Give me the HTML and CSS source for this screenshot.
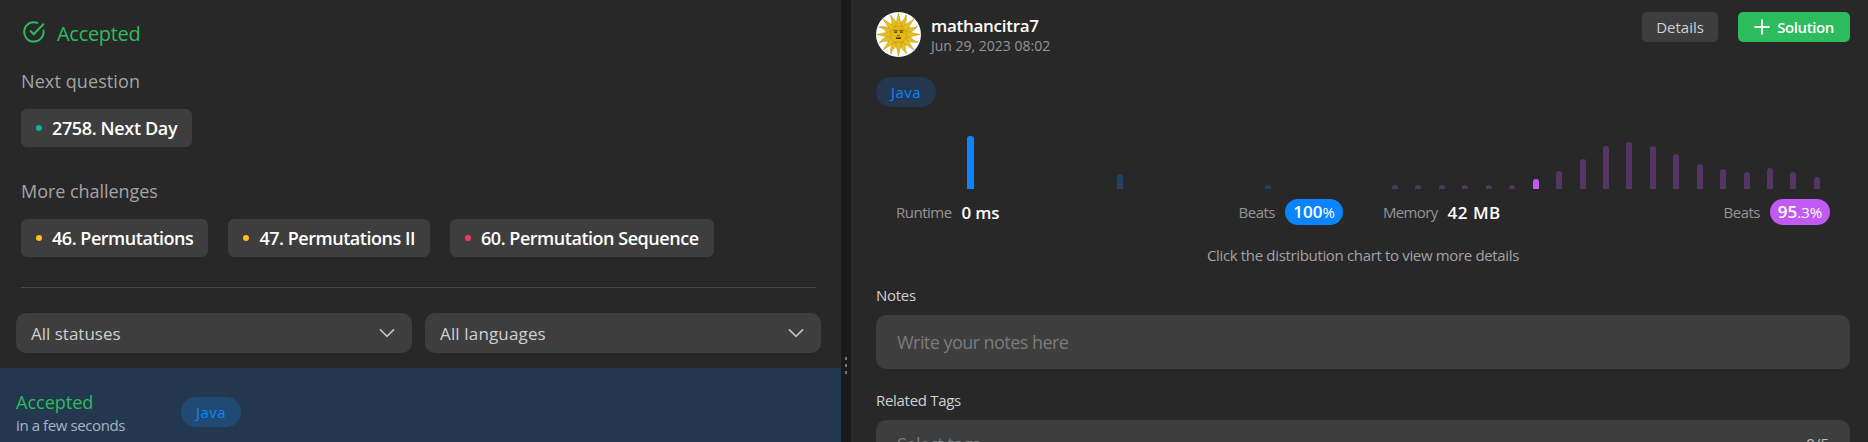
FILE: index.html
```html
<!DOCTYPE html>
<html lang="en">
<head>
<meta charset="utf-8">
<title>Submission</title>
<link rel="stylesheet" href="styles.css">
</head>
<body>
<main class="app">
  <section class="panel left">
    <div class="result">
      <div class="verdict">
        <svg class="verdict-icon" viewBox="0 0 22 22" fill="none" stroke="currentColor" stroke-width="2" stroke-linecap="round" stroke-linejoin="round"><path d="M14.2 1.8A9.7 9.7 0 1 0 20.5 9.6"/><path d="M7.5 10l3.2 3.2L20.3 3.2"/></svg>
        <span class="verdict-text">Accepted</span>
      </div>
      <h2 class="heading next">Next question</h2>
      <div class="chips">
        <a class="chip easy"><i class="dot"></i><span class="day">2758. Next Day</span></a>
      </div>
      <h2 class="heading more">More challenges</h2>
      <div class="chips">
        <a class="chip medium"><i class="dot"></i><span>46. Permutations</span></a>
        <a class="chip medium"><i class="dot"></i><span>47. Permutations II</span></a>
        <a class="chip hard"><i class="dot"></i><span>60. Permutation Sequence</span></a>
      </div>
    </div>
    <div class="filters">
      <div class="select"><span>All statuses</span><svg class="chevron" viewBox="0 0 16 10"><path d="M1 1.3l7 7 7-7"/></svg></div>
      <div class="select"><span class="langs">All languages</span><svg class="chevron" viewBox="0 0 16 10"><path d="M1 1.3l7 7 7-7"/></svg></div>
    </div>
    <div class="submission">
      <div class="status"><div class="status-name">Accepted</div><div class="status-time">in a few seconds</div></div>
      <span class="lang">Java</span>
    </div>
  </section>

  <div class="splitter"><i></i><i></i><i></i></div>

  <section class="panel right">
    <header class="top">
      <svg class="avatar" viewBox="-22.5 -22.5 45 45">
        <circle r="22.5" fill="#fff"/>
        <defs>
          <path id="ray" d="M-3.200-7L0-22 3.200-7z"/>
          <path id="wave" d="M-3-7C-4.500-12 .8-14-.6-21 3.200-15.500 1.500-13 3.400-7z"/>
        </defs>
        <g fill="#e8c01c" stroke="#a8830f" stroke-width=".4">
          <use href="#wave" transform="rotate(22.5)"/><use href="#wave" transform="rotate(67.5)"/><use href="#wave" transform="rotate(112.5)"/><use href="#wave" transform="rotate(157.500)"/><use href="#wave" transform="rotate(202.5)"/><use href="#wave" transform="rotate(247.5)"/><use href="#wave" transform="rotate(292.5)"/><use href="#wave" transform="rotate(337.5)"/>
          <use href="#ray"/><use href="#ray" transform="rotate(45)"/><use href="#ray" transform="rotate(90)"/><use href="#ray" transform="rotate(135)"/><use href="#ray" transform="rotate(180)"/><use href="#ray" transform="rotate(225)"/><use href="#ray" transform="rotate(270)"/><use href="#ray" transform="rotate(315)"/>
        </g>
        <circle r="8.300" fill="#e3b914" stroke="#b18a10" stroke-width=".4"/>
        <g fill="none" stroke="#3a2c08"><path d="M-5-3.800q2-1.200 4 0M1-3.800q2-1.200 4 0" stroke-width=".7"/><path d="M-4.200-2.300h2.800M1.400-2.300h2.800" stroke-width="1.300"/><path d="M-1.200 1.200h2.400" stroke-width=".8"/><path d="M-2.500 3.700h5" stroke-width="1.500"/></g>
      </svg>
      <div class="user"><div class="name">mathancitra7</div><div class="date">Jun 29, 2023 08:02</div></div>
      <button class="btn details">Details</button>
      <button class="btn solution"><svg class="plus" viewBox="0 0 16 16"><path d="M8 .5v15M.5 8h15"/></svg><span>Solution</span></button>
    </header>
    <div class="tagline"><span class="lang">Java</span></div>

    <div class="charts">
      <div class="chart runtime">
        <div class="bars">
          <i class="on" style="height:53px"></i><i style="height:15px"></i><i style="height:4px"></i>
        </div>
        <div class="stats"><span class="label run">Runtime</span><b class="value">0 ms</b><span class="label beats">Beats</span><span class="badge"><b>100</b>%</span></div>
      </div>
      <div class="chart memory">
        <div class="bars">
          <i style="height:4px"></i><i style="height:4px"></i><i style="height:4px"></i><i style="height:4px"></i><i style="height:4px"></i><i style="height:4px"></i><i class="on" style="height:10px"></i><i style="height:18px"></i><i style="height:30px"></i><i style="height:43px"></i><i style="height:47px"></i><i style="height:43px"></i><i style="height:35px"></i><i style="height:25px"></i><i style="height:20px"></i><i style="height:17px"></i><i style="height:21px"></i><i style="height:17px"></i><i style="height:12px"></i>
        </div>
        <div class="stats"><span class="label mem">Memory</span><b class="value mb">42 MB</b><span class="label beats">Beats</span><span class="badge"><b>95</b>.3%</span></div>
      </div>
    </div>
    <p class="hint">Click the distribution chart to view more details</p>

    <label class="field-label">Notes</label>
    <div class="field">Write your notes here</div>
    <label class="field-label tags">Related Tags</label>
    <div class="field select-tags"><span>Select tags</span><span class="count">0/5</span></div>
  </section>
</main>
</body>
</html>
```
FILE: styles.css
```css
* { box-sizing: border-box; }

body {
  margin: 0;
  height: 442px;
  overflow: hidden;
  background: #282828;
  font-family: "Open Sans", "Noto Sans", sans-serif;
  font-size: 15px;
  color: #eff1f6;
}

.app { display: flex; height: 442px; overflow: hidden; white-space: nowrap; }
.panel { background: #282828; }

/* Left panel */
.left { width: 841px; flex: none; }
.result { margin: 0 25px 0 21px; padding-top: 20px; height: 288px; border-bottom: 1px solid #4a4a4a; }
.verdict { display: flex; height: 28px; color: #2cbb5d; }
.verdict-icon { width: 22px; height: 22px; margin: 1px 12px 0 2px; }
.verdict-text { font-size: 20px; line-height: 28px; font-weight: 500; letter-spacing: -.3px; }
.heading { margin: 21px 0 0; font-size: 18px; line-height: 24px; font-weight: 400; color: #a3a3a6; }
.next { letter-spacing: .1px; }
.more { margin-top: 32px; letter-spacing: -.05px; }
.chips { display: flex; gap: 20px; margin-top: 16px; }
.chip {
  display: flex; align-items: center; height: 38px; padding: 0 15px;
  border-radius: 6px; background: #3e3e3e; color: #fff;
  font-size: 18px; font-weight: 600; letter-spacing: -.47px;
}
.day { letter-spacing: -.36px; }
.dot { width: 6px; height: 6px; margin-right: 10px; border-radius: 50%; background: currentColor; }
.easy .dot { background: #00b8a3; }
.medium .dot { background: #ffc01e; }
.hard .dot { background: #ff375f; }

.filters { display: flex; gap: 13px; margin: 25px 20px 0 16px; }
.select {
  display: flex; flex: 1; align-items: center; justify-content: space-between;
  height: 40px; padding: 0 17px 0 15px; border-radius: 10px;
  background: #3e3e3e; color: #d0d0d1; font-size: 17px;
}
.langs { letter-spacing: .15px; }
.chevron { width: 16px; height: 10px; fill: none; stroke: #c0c0c0; stroke-width: 1.7; }

.submission { display: flex; height: 74px; margin-top: 15px; padding: 22px 16px 0; background: #23384f; }
.status { width: 165px; }
.status-name { font-size: 18px; line-height: 24px; font-weight: 500; color: #2cbb5d; }
.status-time { margin-top: 1px; line-height: 20px; letter-spacing: -.4px; color: #a9b3c0; }
.lang {
  display: inline-block; width: 60px; height: 30px; border-radius: 15px;
  background: #23384f; color: #0a84ff; font-weight: 500; line-height: 30px; text-align: center; letter-spacing: .4px;
}
.submission .lang { margin-top: 7px; background: #204a74; }

/* Divider between the panels */
.splitter {
  display: flex; flex: none; flex-direction: column; align-items: center; gap: 4px;
  width: 10px; padding-top: 357px; background: #1a1a1a;
}
.splitter i { width: 2px; height: 3px; background: #777; }

/* Right panel */
.right { flex: 1; padding: 12px 18px 0 25px; }
.top { display: flex; height: 45px; }
.avatar { width: 45px; height: 45px; margin-right: 10px; }
.user { padding-top: 3px; margin-right: auto; }
.name { color: #fff; font-size: 17px; line-height: 22px; font-weight: 600; letter-spacing: -.28px; }
.date { color: #959597; font-size: 14px; line-height: 18px; }
.btn {
  height: 30px; border: 0; border-radius: 5px; padding: 0;
  font: 500 15px/30px "Open Sans", sans-serif; color: #d0d0d1; background: #3e3e3e;
}
.details { width: 76px; margin-right: 20px; }
.solution {
  display: flex; align-items: center; justify-content: center; gap: 7px;
  width: 112px; background: #2cbb5d; color: #fff; font-weight: 600; letter-spacing: -.4px;
}
.plus { width: 16px; height: 16px; stroke: #fff; stroke-width: 1.8; }
.tagline { display: flex; margin-top: 20px; }

.charts { display: flex; margin: 28px 0 0 20px; }
.chart { width: 447px; }
.memory { margin-left: 40px; }
.bars { display: flex; align-items: flex-end; justify-content: space-between; height: 54px; }
.runtime .bars { padding: 0 72px 0 71px; }
.memory .bars { padding: 0 10px 0 9px; }
.bars i { width: 6px; border-radius: 3px 3px 0 0; background: #204264; }
.memory .bars i { background: #563466; }
.runtime .bars .on { width: 7px; background: #0a84ff; }
.memory .bars .on { background: #bf5af2; }
.stats { display: flex; align-items: center; height: 26px; margin-top: 10px; }
.label { color: #959597; letter-spacing: -.5px; }
.mem { letter-spacing: -.65px; }
.value { margin-left: 10px; color: #fff; font-size: 17px; font-weight: 600; letter-spacing: -.2px; }
.mb { letter-spacing: .5px; }
.beats { margin-left: auto; }
.badge {
  display: flex; align-items: baseline; justify-content: center; width: 58px; height: 26px; margin-left: 10px;
  border-radius: 13px; background: #0a84ff; color: #fff; line-height: 26px;
}
.badge b { font-size: 17px; font-weight: 600; }
.memory .badge { width: 60px; background: #bf5af2; }

.hint { margin: 20px 0 0; color: #a3a3a6; line-height: 20px; letter-spacing: -.34px; text-align: center; }
.field-label { display: block; margin-top: 20px; color: #d0d0d1; line-height: 20px; letter-spacing: -.3px; }
.field {
  height: 54px; margin-top: 10px; padding: 0 21px; border-radius: 10px;
  background: #3e3e3e; color: #7b7b7b; font-size: 18px; line-height: 54px; letter-spacing: -.55px;
}
.tags { margin-top: 21px; }
.select-tags { display: flex; justify-content: space-between; line-height: 49px; }
.count { font-size: 15px; line-height: 47px; letter-spacing: 0; color: #c0c0c0; }
```
